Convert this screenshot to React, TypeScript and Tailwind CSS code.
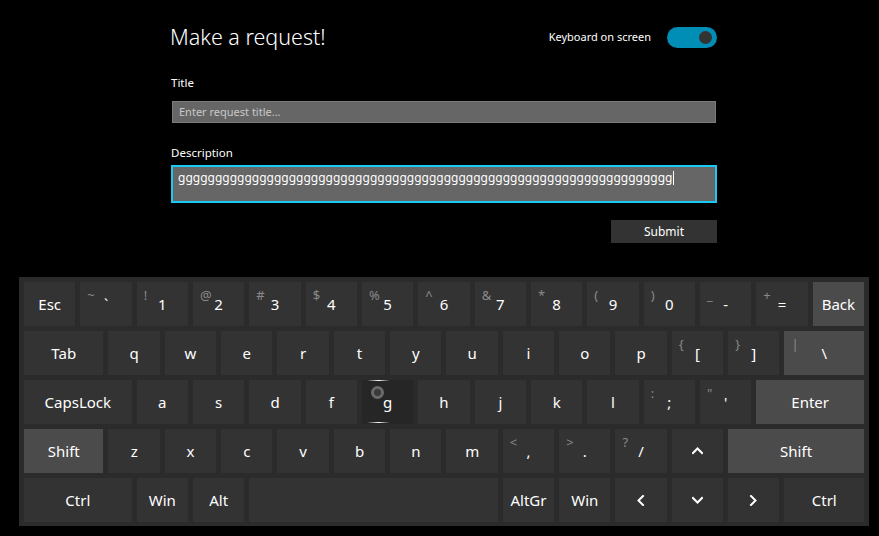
import React from "react";

type K = {
  l?: string;
  s?: string;
  span: number;
  kind?: "special" | "pressed";
  icon?: "up" | "down" | "left" | "right";
};

const spanCls: Record<number, string> = {
  2: "col-span-2",
  3: "col-span-3",
  4: "col-span-4",
  5: "col-span-5",
  9: "col-span-9",
};

const letters = (str: string): K[] => str.split("").map((c) => ({ l: c, span: 2 }));

const rows: K[][] = [
  [
    { l: "Esc", span: 2 },
    { l: "`", s: "~", span: 2 },
    { l: "1", s: "!", span: 2 },
    { l: "2", s: "@", span: 2 },
    { l: "3", s: "#", span: 2 },
    { l: "4", s: "$", span: 2 },
    { l: "5", s: "%", span: 2 },
    { l: "6", s: "^", span: 2 },
    { l: "7", s: "&", span: 2 },
    { l: "8", s: "*", span: 2 },
    { l: "9", s: "(", span: 2 },
    { l: "0", s: ")", span: 2 },
    { l: "-", s: "_", span: 2 },
    { l: "=", s: "+", span: 2 },
    { l: "Back", span: 2, kind: "special" },
  ],
  [
    { l: "Tab", span: 3 },
    ...letters("qwertyuiop"),
    { l: "[", s: "{", span: 2 },
    { l: "]", s: "}", span: 2 },
    { l: "\\", s: "|", span: 3, kind: "special" },
  ],
  [
    { l: "CapsLock", span: 4 },
    ...letters("asdf"),
    { l: "g", span: 2, kind: "pressed" },
    ...letters("hjkl"),
    { l: ";", s: ":", span: 2 },
    { l: "'", s: '"', span: 2 },
    { l: "Enter", span: 4, kind: "special" },
  ],
  [
    { l: "Shift", span: 3, kind: "special" },
    ...letters("zxcvbnm"),
    { l: ",", s: "<", span: 2 },
    { l: ".", s: ">", span: 2 },
    { l: "/", s: "?", span: 2 },
    { icon: "up", span: 2 },
    { l: "Shift", span: 5, kind: "special" },
  ],
  [
    { l: "Ctrl", span: 4 },
    { l: "Win", span: 2 },
    { l: "Alt", span: 2 },
    { l: "", span: 9 },
    { l: "AltGr", span: 2 },
    { l: "Win", span: 2 },
    { icon: "left", span: 2 },
    { icon: "down", span: 2 },
    { icon: "right", span: 2 },
    { l: "Ctrl", span: 3 },
  ],
];

const chevronPts: Record<string, string> = {
  up: "1,7 5.5,2.5 10,7",
  down: "1,3 5.5,7.5 10,3",
  left: "7,1 2.5,5.5 7,10",
  right: "3,1 7.5,5.5 3,10",
};

function Chevron({ dir }: { dir: string }) {
  return (
    <svg width="11" height="11" viewBox="0 0 11 11" fill="none">
      <polyline points={chevronPts[dir]} stroke="white" strokeWidth="2" strokeLinecap="square" />
    </svg>
  );
}

function Key({ k }: { k: K }) {
  const bg =
    k.kind === "special" ? "bg-[#4b4b4b]" : k.kind === "pressed" ? "bg-[#262626]" : "bg-[#333333]";
  return (
    <div className={`${spanCls[k.span]} ${bg} relative flex items-center justify-center text-[15px] text-white`}>
      {k.s && (
        <span className="absolute left-[7px] top-[7px] text-[13px] leading-none text-[#8a8a8a]">{k.s}</span>
      )}
      {k.icon ? <Chevron dir={k.icon} /> : <span className="leading-none">{k.l}</span>}
      {k.kind === "pressed" && (
        <>
          <div className="absolute left-[5px] right-[23px] top-0 h-px bg-gradient-to-r from-transparent via-white to-transparent" />
          <div className="absolute left-[5px] right-[23px] bottom-[1px] h-px bg-gradient-to-r from-transparent via-white to-transparent" />
          <div className="absolute left-[9px] top-[6px] h-[13px] w-[13px] rounded-full border-[3px] border-[#6a6a6a] bg-[#3a3a3a]" />
        </>
      )}
    </div>
  );
}

export default function App() {
  const gs = "g".repeat(67);
  return (
    <div className="w-[879px] h-[536px] bg-black overflow-hidden font-['Noto_Sans',sans-serif] text-white">
      <div className="ml-[171px] w-[546px] pt-[24px] flex flex-col">
        <div className="flex items-center justify-between h-[26px]">
          <h1 className="text-[21.5px] font-light leading-none -ml-[1px]">Make a request!</h1>
          <div className="flex items-center gap-[16px]">
            <span className="text-[11px]">Keyboard on screen</span>
            <div className="w-[50px] h-[21px] rounded-full bg-[#008db6] flex items-center justify-end pr-[5px]">
              <div className="w-[13px] h-[13px] rounded-full bg-[#333333]" />
            </div>
          </div>
        </div>
        <label className="mt-[25px] text-[11.5px] leading-[16px]">Title</label>
        <div className="mt-[10px] ml-[1px] mr-[1px] h-[22px] bg-[#666666] border border-[#7a7a7a] flex items-center pl-[6px] text-[11px] text-[#c9c9c9]">
          Enter request title...
        </div>
        <label className="mt-[22px] text-[11.5px] leading-[16px]">Description</label>
        <div className="mt-[4px] h-[38px] bg-[#666666] border-2 border-[#1ac8f2] flex items-start pt-[3px] pl-[5px] text-[12px] text-white overflow-hidden">
          <span className="whitespace-nowrap leading-[16px]">{gs}</span>
          <span className="inline-block w-px h-[14px] mt-[1px] bg-white ml-px" />
        </div>
        <div className="mt-[17px] self-end w-[106px] h-[23px] bg-[#333333] flex items-center justify-center text-[12px]">
          Submit
        </div>
      </div>
      <div className="mt-[34px] ml-[19px] w-[850px] h-[249px] bg-[#2b2b2b] pt-[5px] pb-[4px] px-[5px]">
        <div className="grid grid-cols-[repeat(30,minmax(0,1fr))] auto-rows-[44px] gap-[5px]">
          {rows.map((r, i) => r.map((k, j) => <Key key={`${i}-${j}`} k={k} />))}
        </div>
      </div>
    </div>
  );
}
